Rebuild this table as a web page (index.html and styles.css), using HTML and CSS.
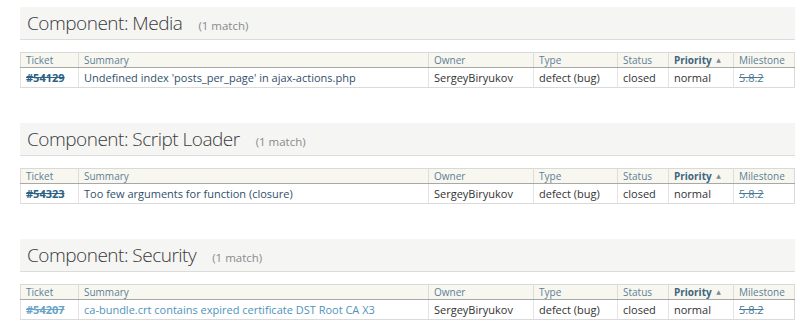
FILE: index.html
```html
<!DOCTYPE html>
<html>
<head>
<meta charset="utf-8">
<link rel="stylesheet" href="styles.css">
</head>
<body>
<div class="page">
  <section class="group">
    <h2 class="group-title"><span class="title-text">Component: Media</span><span class="count">(1 match)</span></h2>
    <table class="listing">
      <thead>
        <tr>
          <th class="c-ticket">Ticket</th>
          <th class="c-summary">Summary</th>
          <th class="c-owner">Owner</th>
          <th class="c-type">Type</th>
          <th class="c-status">Status</th>
          <th class="c-priority asc">Priority <span class="arrow">▲</span></th>
          <th class="c-milestone">Milestone</th>
        </tr>
      </thead>
      <tbody>
        <tr>
          <td><a class="ticket closed">#54129</a></td>
          <td><a class="summary">Undefined index 'posts_per_page' in ajax-actions.php</a></td>
          <td>SergeyBiryukov</td>
          <td>defect (bug)</td>
          <td>closed</td>
          <td>normal</td>
          <td><a class="milestone">5.8.2</a></td>
        </tr>
      </tbody>
    </table>
  </section>

  <section class="group">
    <h2 class="group-title"><span class="title-text">Component: Script Loader</span><span class="count">(1 match)</span></h2>
    <table class="listing">
      <thead>
        <tr>
          <th class="c-ticket">Ticket</th>
          <th class="c-summary">Summary</th>
          <th class="c-owner">Owner</th>
          <th class="c-type">Type</th>
          <th class="c-status">Status</th>
          <th class="c-priority asc">Priority <span class="arrow">▲</span></th>
          <th class="c-milestone">Milestone</th>
        </tr>
      </thead>
      <tbody>
        <tr>
          <td><a class="ticket closed">#54323</a></td>
          <td><a class="summary">Too few arguments for function (closure)</a></td>
          <td>SergeyBiryukov</td>
          <td>defect (bug)</td>
          <td>closed</td>
          <td>normal</td>
          <td><a class="milestone">5.8.2</a></td>
        </tr>
      </tbody>
    </table>
  </section>

  <section class="group">
    <h2 class="group-title"><span class="title-text">Component: Security</span><span class="count">(1 match)</span></h2>
    <table class="listing">
      <thead>
        <tr>
          <th class="c-ticket">Ticket</th>
          <th class="c-summary">Summary</th>
          <th class="c-owner">Owner</th>
          <th class="c-type">Type</th>
          <th class="c-status">Status</th>
          <th class="c-priority asc">Priority <span class="arrow">▲</span></th>
          <th class="c-milestone">Milestone</th>
        </tr>
      </thead>
      <tbody>
        <tr>
          <td><a class="ticket closed light">#54207</a></td>
          <td><a class="summary light">ca-bundle.crt contains expired certificate DST Root CA X3</a></td>
          <td>SergeyBiryukov</td>
          <td>defect (bug)</td>
          <td>closed</td>
          <td>normal</td>
          <td><a class="milestone">5.8.2</a></td>
        </tr>
      </tbody>
    </table>
  </section>
</div>
</body>
</html>
```

FILE: styles.css
```css
html, body {
  margin: 0;
  padding: 0;
  background: #ffffff;
}

body {
  font-family: "Open Sans", "DejaVu Sans", sans-serif;
  color: #333;
}

.page {
  padding: 7px 5px 0 20px;
  display: flex;
  flex-direction: column;
  gap: 35px;
}

.group {
  display: flex;
  flex-direction: column;
  gap: 12px;
}

.group-title {
  margin: 0;
  height: 33px;
  box-sizing: border-box;
  padding: 4px 0 0 7px;
  background: #f5f5f4;
  border-bottom: 1px solid #dcdcdc;
  display: flex;
  align-items: baseline;
  gap: 16px;
  font-weight: 300;
  line-height: 24px;
  color: #3a3a3a;
}

.title-text {
  font-size: 19px;
  letter-spacing: -0.5px;
}

.count {
  font-size: 11.5px;
  font-weight: 400;
  color: #8a8a8a;
}

.listing {
  width: 100%;
  border-collapse: collapse;
  table-layout: fixed;
  border: 1px solid #d9d9d9;
}

.listing th {
  background: #f8f7ef;
  font-weight: 400;
  font-size: 10px;
  color: #5d7e98;
  text-align: left;
  height: 15px;
  padding: 0 5px;
  line-height: 14px;
  border-left: 1px solid #dcdcdc;
  border-bottom: 1px solid #a8a8a8;
  box-sizing: border-box;
}

.listing th.asc {
  font-weight: 700;
  color: #3e6580;
}

.arrow {
  font-size: 6px;
  color: #7a8a96;
  vertical-align: 2px;
  margin-left: 2px;
}

.listing td {
  font-size: 11px;
  color: #333;
  height: 19px;
  padding: 0 5px;
  border-left: 1px solid #e4e4e4;
  border-bottom: 1px solid #dadada;
  white-space: nowrap;
  overflow: hidden;
}

.c-ticket { width: 58px; }
.c-summary { width: 350px; }
.c-owner { width: 105px; }
.c-type { width: 84px; }
.c-status { width: 51px; }
.c-priority { width: 65px; }

.ticket {
  color: #2b6184;
  font-weight: 700;
  text-decoration: line-through;
}

.ticket.light {
  color: #6aa3c7;
}

.summary {
  color: #30506a;
}

.summary.light {
  color: #4f93bb;
}

.milestone {
  color: #4a7896;
  text-decoration: line-through;
}
```
